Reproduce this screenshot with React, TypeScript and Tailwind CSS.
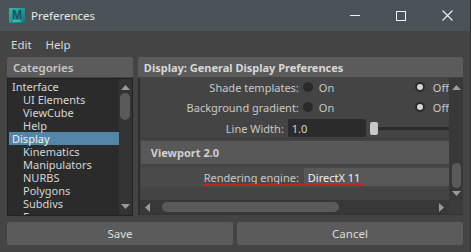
import React from 'react';

const categories = [
  { label: 'Interface', depth: 0 },
  { label: 'UI Elements', depth: 1 },
  { label: 'ViewCube', depth: 1 },
  { label: 'Help', depth: 1 },
  { label: 'Display', depth: 0, selected: true },
  { label: 'Kinematics', depth: 1 },
  { label: 'Manipulators', depth: 1 },
  { label: 'NURBS', depth: 1 },
  { label: 'Polygons', depth: 1 },
  { label: 'Subdivs', depth: 1 },
  { label: 'Fur', depth: 1 },
];

const Radio: React.FC<{ on?: boolean }> = ({ on }) => (
  <span className="w-[10px] h-[10px] rounded-full bg-[#2a2a2a] flex items-center justify-center shrink-0">
    {on && <span className="w-[6px] h-[6px] rounded-full bg-[#d6d6d6]" />}
  </span>
);

const ArrowUp = () => (
  <svg width="9" height="5" viewBox="0 0 9 5"><path d="M0 5 L4.5 0 L9 5 Z" fill="#9a9a9a" /></svg>
);
const ArrowDown = () => (
  <svg width="9" height="5" viewBox="0 0 9 5"><path d="M0 0 L4.5 5 L9 0 Z" fill="#9a9a9a" /></svg>
);
const ArrowLeft = () => (
  <svg width="5" height="9" viewBox="0 0 5 9"><path d="M5 0 L0 4.5 L5 9 Z" fill="#9a9a9a" /></svg>
);
const ArrowRight = () => (
  <svg width="5" height="9" viewBox="0 0 5 9"><path d="M0 0 L5 4.5 L0 9 Z" fill="#9a9a9a" /></svg>
);

const RadioRow: React.FC<{ label: string; className?: string }> = ({ label, className }) => (
  <div className={`flex items-center h-[18px] shrink-0 ${className ?? ''}`}>
    <span className="w-[163px] shrink-0 text-right pr-[4px] text-[#c8c8c8]">{label}</span>
    <Radio />
    <span className="ml-[6px] text-[#c8c8c8] w-[96px] shrink-0">On</span>
    <Radio on />
    <span className="ml-[8px] text-[#c8c8c8] whitespace-nowrap">Off</span>
  </div>
);

const App: React.FC = () => {
  return (
    <div className="w-[471px] h-[252px] bg-[#444444] flex flex-col overflow-hidden border-r border-[#333] text-[11px] leading-[13px]" style={{ fontFamily: '"Noto Sans", "Open Sans", sans-serif' }}>
      {/* title bar */}
      <div className="h-[31px] bg-[#4b5358] flex items-center shrink-0">
        <svg width="16" height="15" viewBox="0 0 16 15" className="ml-[9px]">
          <defs>
            <linearGradient id="mg" x1="0" y1="0" x2="1" y2="1">
              <stop offset="0" stopColor="#3cb4b4" />
              <stop offset="1" stopColor="#16737a" />
            </linearGradient>
          </defs>
          <rect width="16" height="15" fill="url(#mg)" />
          <text x="8" y="11" textAnchor="middle" fontSize="12" fontWeight="bold" fill="#0f5558" fontFamily="Liberation Sans, sans-serif">M</text>
          <rect x="4" y="12.5" width="8" height="1" fill="#7fcfcf" />
        </svg>
        <span className="ml-[6px] text-[#e8e8e8] text-[11.5px]">Preferences</span>
        <div className="ml-auto flex items-center h-full">
          <div className="w-[46px] h-full flex items-center justify-center">
            <span className="w-[10px] h-px bg-[#f0f0f0]" />
          </div>
          <div className="w-[46px] h-full flex items-center justify-center">
            <span className="w-[10px] h-[10px] border border-[#f0f0f0]" />
          </div>
          <div className="w-[46px] h-full flex items-center justify-center">
            <svg width="11" height="11" viewBox="0 0 11 11"><path d="M0.5 0.5 L10.5 10.5 M10.5 0.5 L0.5 10.5" stroke="#f0f0f0" strokeWidth="1.1" /></svg>
          </div>
        </div>
      </div>

      {/* menu bar */}
      <div className="h-[26px] flex items-center shrink-0 text-[#d8d8d8] text-[11.5px]">
        <span className="ml-[11px]">Edit</span>
        <span className="ml-[14px]">Help</span>
      </div>

      {/* main */}
      <div className="flex gap-[5px] px-[7px] h-[159px] shrink-0">
        <div className="w-[130px] flex flex-col">
          <div className="h-[20px] bg-[#5b5b5b] rounded-t-[2px] flex items-center pl-[6px] text-[#c8c8c8] font-semibold text-[11.5px]">Categories</div>
          <div className="mt-[1px] h-[138px] bg-[#2b2b2b] border border-[#222] flex overflow-hidden">
            <div className="flex-1 pt-[1px] pl-[1px] overflow-hidden">
              {categories.map(c => (
                <div key={c.label} className={`h-[13px] flex items-center text-[#d6d6d6] ${c.selected ? 'bg-[#5285a6] text-[#f0f0f0]' : ''} ${c.depth ? 'pl-[14px]' : 'pl-[3px]'}`}>{c.label}</div>
              ))}
            </div>
            <div className="w-[13px] bg-[#333333] flex flex-col items-center py-[6px]">
              <ArrowUp />
              <div className="mt-[3px] w-[10px] h-[27px] rounded-full bg-[#5a5a5a]" />
              <div className="mt-auto"><ArrowDown /></div>
            </div>
          </div>
        </div>

        <div className="flex-1 flex flex-col">
          <div className="h-[20px] bg-[#5b5b5b] rounded-t-[2px] flex items-center pl-[6px] text-[#d8d8d8] font-bold">Display: General Display Preferences</div>
          <div className="mt-[1px] h-[137px] border-l-2 border-[#2e2e2e] flex flex-col">
            <div className="flex flex-1 min-h-0">
              <div className="flex-1 overflow-hidden flex flex-col">
                <RadioRow label="Shade templates:" />
                <RadioRow label="Background gradient:" className="mt-[2px]" />
                <div className="flex items-center h-[18px] mt-[3px] shrink-0">
                  <span className="w-[148px] shrink-0 text-right pr-[4px] text-[#c8c8c8]">Line Width:</span>
                  <div className="w-[78px] shrink-0 h-[18px] bg-[#2b2b2b] rounded-[2px] flex items-center pl-[4px] text-[#d8d8d8]">1.0</div>
                  <div className="ml-[4px] w-[8px] h-[13px] shrink-0 rounded-[2px] bg-[#c8c8c8]" />
                  <div className="flex-1 h-[3px] bg-[#2b2b2b]" />
                </div>
                <div className="h-px bg-[#3a3a3a] mt-[1px] shrink-0" />
                <div className="mt-[2px] ml-[1px] h-[23px] shrink-0 bg-[#585858] flex items-center pl-[10px] text-[#d0d0d0] font-bold">Viewport 2.0</div>
                <div className="relative mt-[3px] ml-[1px] h-[20px] shrink-0 bg-[#4a4a4a] flex items-center">
                  <span className="w-[163px] shrink-0 text-right pr-[5px] text-[#c8c8c8]">Rendering engine:</span>
                  <div className="flex-1 h-[18px] bg-[#585858] flex items-center pl-[4px] text-[#f0f0f0]">DirectX 11</div>
                  <div className="absolute left-[62px] top-[17px] w-[160px] h-[2px] bg-[#c8202a]" />
                </div>
              </div>
              <div className="w-[14px] bg-[#383838] flex flex-col items-center pt-[7px] pb-[4px]">
                <ArrowUp />
                <div className="mt-auto w-[9px] h-[25px] rounded-full bg-[#5a5a5a]" />
                <div className="mt-[3px]"><ArrowDown /></div>
              </div>
            </div>
            <div className="h-[14px] flex shrink-0">
              <div className="flex-1 bg-[#383838] flex items-center px-[5px]">
                <ArrowLeft />
                <div className="ml-[12px] w-[177px] h-[10px] rounded-full bg-[#5a5a5a]" />
                <div className="ml-auto"><ArrowRight /></div>
              </div>
              <div className="w-[14px] bg-[#3c3c3c]" />
            </div>
            <div className="h-px bg-[#333] shrink-0" />
          </div>
        </div>
      </div>

      {/* buttons */}
      <div className="flex gap-[4px] px-[7px] mt-[6px] h-[23px] shrink-0 text-[11.5px]">
        <button className="flex-1 bg-[#5b5b5b] text-[#dcdcdc] rounded-[2px]">Save</button>
        <button className="flex-1 bg-[#5b5b5b] text-[#dcdcdc] rounded-[2px]">Cancel</button>
      </div>
    </div>
  );
};

export default App;
